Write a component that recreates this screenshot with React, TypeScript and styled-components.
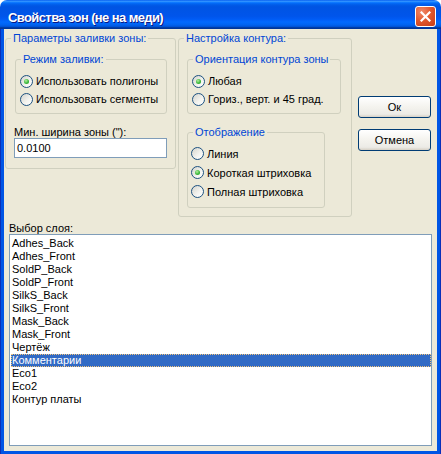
import React from 'react';
import styled, { createGlobalStyle } from 'styled-components';

const Global = createGlobalStyle`
  html, body { margin: 0; padding: 0; background: #ffffff; }
  body { font-family: "Liberation Sans", Arial, sans-serif; font-size: 11px; color: #000; }
  * { box-sizing: border-box; }
`;

const Window = styled.div`
  width: 441px;
  height: 454px;
  display: flex;
  flex-direction: column;
`;

const TitleBar = styled.div`
  height: 29px;
  flex: none;
  display: flex;
  align-items: flex-start;
  padding: 0 5px 0 8px;
  border-radius: 7px 7px 0 0;
  background: linear-gradient(180deg,
    #0058ee 0%, #3593ff 4%, #288eff 6%, #127dff 8%, #036ffc 10%,
    #0262ee 14%, #0057e5 20%, #0054e3 24%, #0055eb 56%, #005bf5 66%,
    #026afe 76%, #0062ef 86%, #0052d6 92%, #0040ab 94%, #003092 100%);
`;

const Title = styled.div`
  flex: 1;
  color: #ffffff;
  font-family: "Liberation Sans", Arial, sans-serif;
  font-weight: bold;
  font-size: 13px;
  letter-spacing: -0.6px;
  line-height: 16px;
  margin-top: 10px;
  text-shadow: 1px 1px 0 #0a1883;
  white-space: nowrap;
`;

const CloseButton = styled.div`
  width: 21px;
  height: 21px;
  margin-top: 6px;
  flex: none;
  border: 1px solid #ffffff;
  border-radius: 3px;
  background: radial-gradient(circle at 30% 25%, #f08a6a 0%, #e2592f 45%, #c63b16 100%);
  display: flex;
  align-items: center;
  justify-content: center;
`;

const Frame = styled.div`
  flex: 1;
  display: flex;
  padding: 0 4px 4px;
  background: #0055e5;
  box-shadow: inset 1px 0 0 #0a2fb8, inset -1px 0 0 #0a2fb8, inset 0 -1px 0 #0a2fb8;
`;

const Client = styled.div`
  flex: 1;
  background: #ece9d8;
  display: flex;
  flex-direction: column;
  padding: 3px 5px 5px 1px;
`;

const TopRow = styled.div`
  display: flex;
  align-items: flex-start;
`;

const Group = styled.fieldset<{ $width: number; $mt?: number; $ml?: number; $mr?: number }>`
  margin: ${p => p.$mt ?? 0}px ${p => p.$mr ?? 0}px 0 ${p => p.$ml ?? 0}px;
  padding: 0;
  width: ${p => p.$width}px;
  min-width: 0;
  flex: none;
  border: 1px solid #d0d0bf;
  border-radius: 3px;
`;

const Legend = styled.legend`
  margin-left: 5px;
  padding: 0 2px;
  color: #0046d5;
  font-size: 11px;
  line-height: 13px;
`;

const GroupBody = styled.div<{ $pad: string }>`
  display: flex;
  flex-direction: column;
  align-items: flex-start;
  padding: ${p => p.$pad};
`;

const RadioRow = styled.div<{ $h: number }>`
  display: flex;
  align-items: center;
  height: ${p => p.$h}px;
  gap: 3px;
  white-space: nowrap;
`;

const RadioCircle = styled.span<{ $checked: boolean }>`
  width: 13px;
  height: 13px;
  flex: none;
  border-radius: 50%;
  border: 1px solid #1c5180;
  background: linear-gradient(135deg, #d4d4cc 0%, #f4f4f0 60%, #ffffff 100%);
  display: flex;
  align-items: center;
  justify-content: center;
  &::after {
    content: '';
    width: 5px;
    height: 5px;
    border-radius: 50%;
    background: radial-gradient(circle at 40% 35%, #b4f0a0 0%, #3cb83c 55%, #1f9a1f 100%);
    display: ${p => (p.$checked ? 'block' : 'none')};
  }
`;

const FieldLabel = styled.div<{ $mt: number; $ml?: number }>`
  margin-top: ${p => p.$mt}px;
  margin-left: ${p => p.$ml ?? 0}px;
  line-height: 12px;
  white-space: nowrap;
`;

const TextInput = styled.div`
  width: 153px;
  height: 20px;
  border: 1px solid #7f9db9;
  background: #ffffff;
  padding-left: 2px;
  line-height: 18px;
`;

const ButtonColumn = styled.div`
  display: flex;
  flex-direction: column;
  gap: 11px;
  margin-left: 6px;
  margin-top: 64px;
`;

const Button = styled.div`
  width: 73px;
  height: 22px;
  border: 1px solid #003c74;
  border-radius: 3px;
  background: linear-gradient(180deg, #ffffff 0%, #f4f3ee 50%, #ecebe6 86%, #d6d0c5 100%);
  display: flex;
  align-items: center;
  justify-content: center;
`;

const ListBox = styled.div`
  margin-left: 4px;
  width: 423px;
  height: 212px;
  border: 1px solid #7f9db9;
  background: #ffffff;
  padding-top: 2px;
  display: flex;
  flex-direction: column;
`;

const ListItem = styled.div<{ $selected: boolean }>`
  height: 13px;
  line-height: 13px;
  margin: 0 0 0 1px;
  padding-left: 1px;
  white-space: nowrap;
  background: ${p => (p.$selected ? '#316ac5' : 'transparent')};
  color: ${p => (p.$selected ? '#ffffff' : '#000000')};
  outline: ${p => (p.$selected ? '1px dotted #f2c47a' : 'none')};
  outline-offset: -1px;
`;

type RadioDef = { label: string; checked: boolean };

const Radio: React.FC<RadioDef & { h: number }> = ({ label, checked, h }) => (
  <RadioRow $h={h}>
    <RadioCircle $checked={checked} />
    <span>{label}</span>
  </RadioRow>
);

const fillMode: RadioDef[] = [
  { label: 'Использовать полигоны', checked: true },
  { label: 'Использовать сегменты', checked: false },
];

const orientation: RadioDef[] = [
  { label: 'Любая', checked: true },
  { label: 'Гориз., верт. и 45 град.', checked: false },
];

const display: RadioDef[] = [
  { label: 'Линия', checked: false },
  { label: 'Короткая штриховка', checked: true },
  { label: 'Полная штриховка', checked: false },
];

const layers = [
  'Adhes_Back', 'Adhes_Front', 'SoldP_Back', 'SoldP_Front', 'SilkS_Back',
  'SilkS_Front', 'Mask_Back', 'Mask_Front', 'Чертёж', 'Комментарии',
  'Eco1', 'Eco2', 'Контур платы',
];

export default function App() {
  return (
    <>
      <Global />
      <Window>
        <TitleBar>
          <Title>Свойства зон (не на меди)</Title>
          <CloseButton>
            <svg width="11" height="11" viewBox="0 0 11 11">
              <path d="M1.5 1.5 L9.5 9.5 M9.5 1.5 L1.5 9.5" stroke="#ffffff" strokeWidth="2.2" strokeLinecap="square" />
            </svg>
          </CloseButton>
        </TitleBar>
        <Frame>
          <Client>
            <TopRow>
              <Group $width={171} $mr={2}>
                <Legend>Параметры заливки зоны:</Legend>
                <GroupBody $pad="8px 8px 10px 8px">
                  <Group $width={152} $ml={1}>
                    <Legend>Режим заливки:</Legend>
                    <GroupBody $pad="6px 4px 5px 4px">
                      {fillMode.map(r => <Radio key={r.label} {...r} h={18} />)}
                    </GroupBody>
                  </Group>
                  <FieldLabel $mt={12}>Мин. ширина зоны ("):</FieldLabel>
                  <TextInput>0.0100</TextInput>
                </GroupBody>
              </Group>
              <Group $width={174}>
                <Legend>Настройка контура:</Legend>
                <GroupBody $pad="8px 10px 8px 8px">
                  <Group $width={154}>
                    <Legend>Ориентация контура зоны</Legend>
                    <GroupBody $pad="6px 4px 5px 4px">
                      {orientation.map(r => <Radio key={r.label} {...r} h={18} />)}
                    </GroupBody>
                  </Group>
                  <Group $width={138} $mt={12}>
                    <Legend>Отображение</Legend>
                    <GroupBody $pad="5px 4px 6px 3px">
                      {display.map(r => <Radio key={r.label} {...r} h={19} />)}
                    </GroupBody>
                  </Group>
                </GroupBody>
              </Group>
              <ButtonColumn>
                <Button>Ок</Button>
                <Button>Отмена</Button>
              </ButtonColumn>
            </TopRow>
            <FieldLabel $mt={5} $ml={4}>Выбор слоя:</FieldLabel>
            <ListBox>
              {layers.map(l => (
                <ListItem key={l} $selected={l === 'Комментарии'}>{l}</ListItem>
              ))}
            </ListBox>
          </Client>
        </Frame>
      </Window>
    </>
  );
}
